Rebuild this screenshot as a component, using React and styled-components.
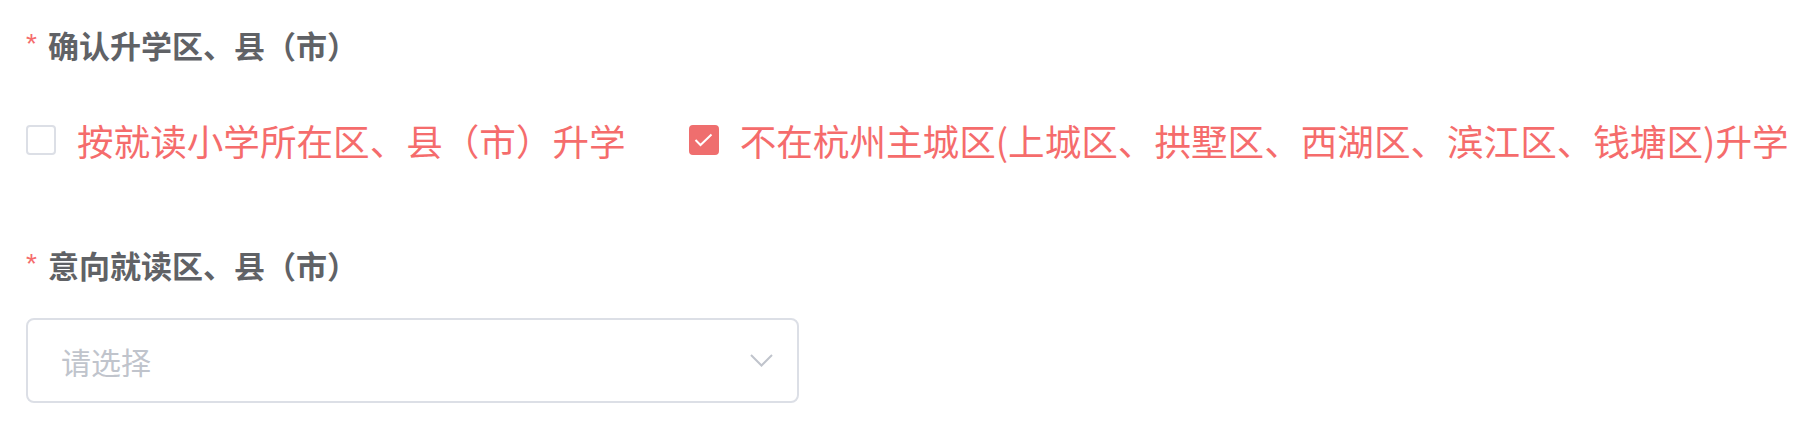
import React, { useState } from 'react';
import styled, { createGlobalStyle } from 'styled-components';

const GlobalStyle = createGlobalStyle`
    body {
        margin: 0;
        background: #ffffff;
        font-family: "Noto Sans CJK SC", "Noto Sans", sans-serif;
    }
`;

const Page = styled.div`
    padding: 14px 0 0 26px;
`;

const FormItem = styled.div`
    display: flex;
    flex-direction: column;
    margin-bottom: ${props => props.$gap || 0}px;
`;

const Label = styled.div`
    display: flex;
    align-items: center;
    height: 60px;
    font-size: 31px;
    font-weight: 700;
    color: #606266;
    margin-bottom: ${props => props.$gap || 0}px;

    &::before {
        content: '*';
        color: #f56c6c;
        font-family: "Liberation Sans", sans-serif;
        font-weight: 400;
        font-size: 28px;
        margin-right: 11px;
    }
`;

const Group = styled.div`
    display: flex;
    align-items: center;
    height: 50px;
`;

const Option = styled.label`
    display: flex;
    align-items: center;
    margin-right: 63px;
    cursor: pointer;
    font-size: 36.6px;
    color: #f56c6c;
    white-space: nowrap;

    &:last-child {
        margin-right: 0;
    }
`;

const Box = styled.span`
    display: flex;
    align-items: center;
    justify-content: center;
    box-sizing: border-box;
    width: 30px;
    height: 30px;
    margin-right: 21px;
    border-radius: 4px;
    border: 2px solid ${props => (props.$checked ? '#ef6e6e' : '#dcdfe6')};
    background: ${props => (props.$checked ? '#ef6e6e' : '#ffffff')};
`;

const Select = styled.div`
    display: flex;
    align-items: center;
    justify-content: space-between;
    box-sizing: border-box;
    width: 773px;
    height: 85px;
    padding: 0 24px 0 33px;
    border: 2px solid #dcdfe6;
    border-radius: 8px;
    font-size: 30px;
    color: #c0c4cc;
    cursor: pointer;
`;

const Check = () => (
    <svg width="19" height="14" viewBox="0 0 19 14">
        <polyline points="1.5,7 6.5,12 17.5,1.5" fill="none" stroke="#ffffff" strokeWidth="2" />
    </svg>
);

const Chevron = () => (
    <svg width="23" height="13" viewBox="0 0 23 13">
        <polyline points="1,1 11.5,11.5 22,1" fill="none" stroke="#c0c4cc" strokeWidth="2" />
    </svg>
);

const options = [
    '按就读小学所在区、县（市）升学',
    '不在杭州主城区(上城区、拱墅区、西湖区、滨江区、钱塘区)升学',
];

export default function App() {
    const [checked, setChecked] = useState([false, true]);

    const toggle = i => setChecked(c => c.map((v, j) => (j === i ? !v : v)));

    return (
        <Page>
            <GlobalStyle />
            <FormItem $gap={69}>
                <Label $gap={41}>确认升学区、县（市）</Label>
                <Group>
                    {options.map((text, i) => (
                        <Option key={text} onClick={() => toggle(i)}>
                            <Box $checked={checked[i]}>{checked[i] && <Check />}</Box>
                            {text}
                        </Option>
                    ))}
                </Group>
            </FormItem>
            <FormItem>
                <Label $gap={24}>意向就读区、县（市）</Label>
                <Select>
                    <span>请选择</span>
                    <Chevron />
                </Select>
            </FormItem>
        </Page>
    );
}
